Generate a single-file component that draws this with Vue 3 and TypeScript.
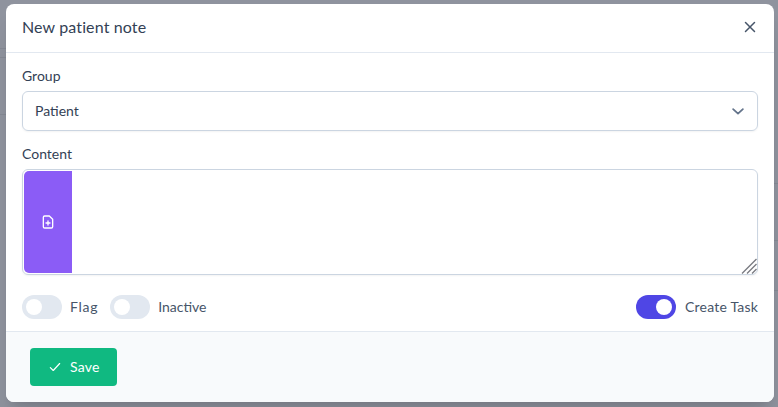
<script setup lang="ts">
import { ref } from 'vue'
const group = ref('Patient')
const content = ref('')
const toggles = ref([
  { label: 'Flag', cls: 'wide' },
  { label: 'Inactive', cls: '' },
])
</script>

<template>
  <div class="backdrop">
    <div class="modal">
      <header class="head">
        <h3 class="title">New patient note</h3>
        <button class="close" aria-label="Close">
          <svg width="18" height="18" viewBox="0 0 24 24" fill="none" stroke="currentColor" stroke-width="2" stroke-linecap="round"><path d="M6 6l12 12M18 6L6 18" /></svg>
        </button>
      </header>
      <div class="body">
        <div class="label">Group</div>
        <div class="select">
          <span class="lift">{{ group }}</span>
          <svg width="18" height="18" viewBox="0 0 24 24" fill="none" stroke="currentColor" stroke-width="2.4" stroke-linecap="round" stroke-linejoin="round"><path d="M5.500 9.500l6.500 6 6.500-6" /></svg>
        </div>
        <div class="label second">Content</div>
        <div class="editor">
          <div class="tool">
            <svg width="16" height="16" viewBox="0 0 24 24" fill="none" stroke="currentColor" stroke-width="2" stroke-linecap="round" stroke-linejoin="round"><path d="M14 3H7a2 2 0 0 0-2 2v14a2 2 0 0 0 2 2h10a2 2 0 0 0 2-2V8z" /><path d="M12 10.500v6M9 13.500h6" /></svg>
          </div>
          <textarea v-model="content" class="text"></textarea>
          <svg class="grip" width="16" height="16" viewBox="0 0 16 16" fill="none" stroke="#7b7d83" stroke-width="1.4"><path d="M1 15.500L15.500 1M6 15.500L15.500 6M11 15.500l4.500-4.500" /></svg>
        </div>
        <div class="switches">
          <label v-for="t in toggles" :key="t.label" class="sw" :class="t.cls"><span class="track"><span class="knob" /></span><span class="lift">{{ t.label }}</span></label>
          <label class="sw end"><span class="track on"><span class="knob" /></span><span class="lift">Create Task</span></label>
        </div>
      </div>
      <footer class="foot">
        <button class="save">
          <svg width="14" height="14" viewBox="0 0 24 24" fill="none" stroke="currentColor" stroke-width="2" stroke-linecap="round" stroke-linejoin="round"><path d="M4 13l5 5L20 6" /></svg>
          <span class="lift">Save</span>
        </button>
      </footer>
    </div>
  </div>
</template>

<style>
html, body { margin: 0; }
</style>

<style scoped>
.backdrop {
  width: 778px;
  height: 407px;
  box-sizing: border-box;
  padding: 4px 4px 5px 6px;
  background:
    linear-gradient(#858994, #858994) 0 48px / 6px 1px no-repeat,
    linear-gradient(#858994, #858994) 0 57px / 6px 1px no-repeat,
    linear-gradient(#858994, #858994) 0 114px / 6px 1px no-repeat,
    linear-gradient(#858994, #858994) 774px 183px / 4px 1px no-repeat,
    linear-gradient(#858994, #858994) 774px 240px / 4px 1px no-repeat,
    linear-gradient(#858994, #858994) 774px 290px / 4px 1px no-repeat,
    #8f939e;
  font-family: "Lato", sans-serif;
  color: #334155;
  overflow: hidden;
}
.modal {
  height: 398px;
  background: #fff;
  border-radius: 8px;
  overflow: hidden;
  display: flex;
  flex-direction: column;
  box-shadow: 0 20px 25px -5px rgba(0, 0, 0, 0.1), 0 8px 10px -6px rgba(0, 0, 0, 0.1);
}
.head {
  flex: none;
  height: 48px;
  padding: 0 15px 0 16px;
  display: flex;
  align-items: center;
  justify-content: space-between;
  border-bottom: 1px solid #e2e8f0;
}
.title {
  margin: 0 0 3px;
  font-size: 16px;
  font-weight: 400;
  letter-spacing: 0.13px;
  color: #334155;
}
.close {
  border: 0;
  background: none;
  padding: 0;
  margin-bottom: 2px;
  display: flex;
  color: #475569;
}
.body {
  flex: 1;
  padding: 13px 16px 12px 16px;
}
.label {
  font-size: 14px;
  line-height: 20px;
  margin-bottom: 5px;
}
.lift { margin-bottom: 2px; }
.second { margin-top: 13px; }
.select {
  height: 38px;
  border: 1px solid #cbd5e1;
  border-radius: 6px;
  padding: 0 10px 0 12px;
  display: flex;
  align-items: center;
  justify-content: space-between;
  font-size: 14px;
  box-shadow: 0 1px 2px rgba(0, 0, 0, 0.05);
}
.select svg { color: #64748b; }
.editor {
  position: relative;
  height: 102px;
  border: 1px solid #cbd5e1;
  border-radius: 6px;
  padding: 1px;
  display: flex;
  box-shadow: 0 1px 2px rgba(0, 0, 0, 0.05);
}
.tool {
  width: 48px;
  flex: none;
  background: #8b5cf6;
  color: #fff;
  border-radius: 5px 0 0 5px;
  display: flex;
  align-items: center;
  justify-content: center;
}
.text {
  flex: 1;
  min-width: 0;
  box-sizing: border-box;
  height: 102px;
  border: 0;
  outline: none;
  padding: 8px 12px;
  resize: none;
  background: transparent;
  border-radius: 0 5px 5px 0;
}
.grip { position: absolute; right: 0; bottom: 0; }
.switches {
  display: flex;
  align-items: center;
  gap: 12px;
  margin-top: 20px;
}
.sw {
  display: flex;
  align-items: center;
  gap: 8px;
  font-size: 14px;
  color: #475569;
}
.wide { letter-spacing: 0.7px; }
.end { margin-left: auto; gap: 9px; letter-spacing: 0.2px; }
.track {
  width: 40px;
  height: 24px;
  border-radius: 12px;
  background: #e2e8f0;
  display: flex;
  align-items: center;
  padding: 4px;
  box-sizing: border-box;
}
.track.on { background: #4f46e5; justify-content: flex-end; }
.knob {
  width: 16px;
  height: 16px;
  border-radius: 50%;
  background: #fff;
}
.foot {
  flex: none;
  height: 71px;
  box-sizing: border-box;
  background: #f8fafc;
  border-top: 1px solid #e2e8f0;
  padding: 16px 24px;
}
.save {
  width: 87px;
  height: 38px;
  border: 0;
  border-radius: 4px;
  background: #10b981;
  color: #fff;
  font: inherit;
  font-size: 14px;
  letter-spacing: 0.2px;
  display: flex;
  align-items: center;
  gap: 8px;
  padding: 0 0 0 18px;
}
</style>
